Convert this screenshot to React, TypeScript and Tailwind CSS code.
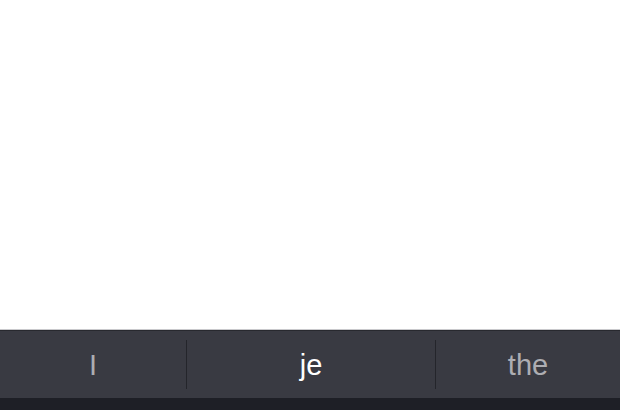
export default function App() {
  const words = [
    { text: 'I', w: 'w-[186px]', active: false },
    { text: 'je', w: 'w-[249px]', active: true },
    { text: 'the', w: 'flex-1', active: false },
  ];
  return (
    <div className="h-[410px] w-[620px] flex flex-col bg-white" style={{ fontFamily: '"Liberation Sans", Arial, sans-serif' }}>
      <div className="flex-1 bg-white" />
      <div className="h-px bg-[#c9c9cc]" />
      <div className="h-px bg-[#28292f]" />
      <div className="h-[67px] bg-[#393a42] flex items-center">
        {words.map((w, i) => (
          <div
            key={w.text}
            className={`${w.w} h-[49px] flex items-center justify-center ${i > 0 ? 'border-l border-[#24252b]' : ''}`}
          >
            <span className={`text-[29px] leading-none pt-[2px] ${w.active ? 'text-white' : 'text-[#adadb2]'}`}>{w.text}</span>
          </div>
        ))}
      </div>
      <div className="h-[12px] bg-[#1e1f26]" />
    </div>
  );
}
